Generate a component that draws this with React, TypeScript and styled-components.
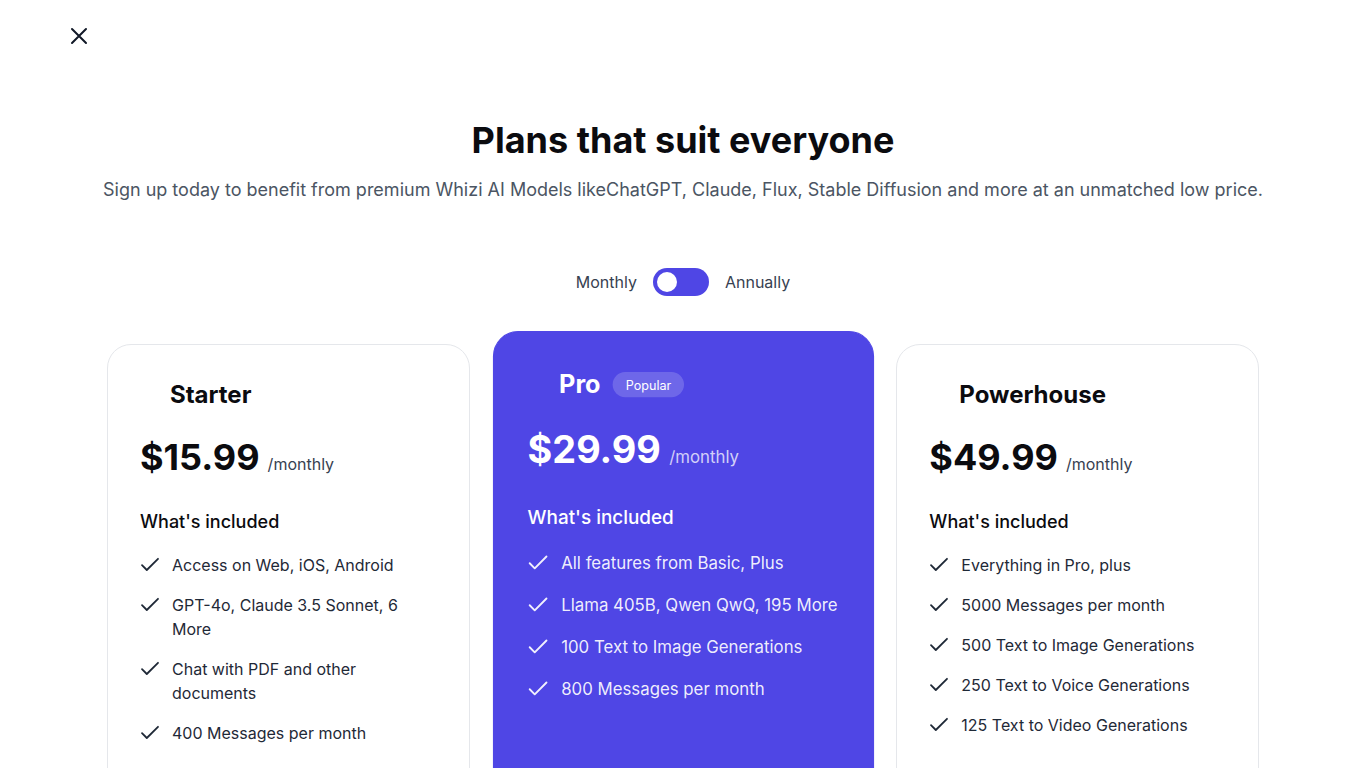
import React from "react";
import styled, { createGlobalStyle } from "styled-components";

const Global = createGlobalStyle`
  * { box-sizing: border-box; }
  html, body { margin: 0; padding: 0; background: #ffffff; }
  body { font-family: Inter, "Noto Sans", sans-serif; color: #111827; overflow: hidden; }
`;

const Page = styled.div`
  position: relative;
  width: 100%;
  min-height: 768px;
  padding-top: 116px;
`;

const CloseButton = styled.button`
  position: absolute;
  left: 65px;
  top: 22px;
  width: 28px;
  height: 28px;
  padding: 0;
  border: 0;
  background: transparent;
  display: flex;
  align-items: center;
  justify-content: center;
  cursor: pointer;
  color: #111827;
`;

const Header = styled.header`
  display: flex;
  flex-direction: column;
  align-items: center;
  text-align: center;
`;

const Title = styled.h1`
  margin: 0;
  font-size: 36px;
  line-height: 48px;
  font-weight: 700;
  color: #0b0b0f;
`;

const Subtitle = styled.p`
  margin: 17px 0 0;
  font-size: 18px;
  line-height: 1;
  color: #4b5563;
`;

const ToggleRow = styled.div`
  display: flex;
  align-items: center;
  justify-content: center;
  gap: 16px;
  margin-top: 69px;
`;

const ToggleLabel = styled.span`
  font-size: 16px;
  line-height: 24px;
  color: #374151;
`;

const Track = styled.div`
  width: 56px;
  height: 28px;
  border-radius: 14px;
  background: #4f46e5;
  padding: 4px;
  display: flex;
  align-items: center;
`;

const Knob = styled.div`
  width: 20px;
  height: 20px;
  border-radius: 50%;
  background: #ffffff;
`;

const Grid = styled.div`
  width: 1152px;
  margin: 48px auto 0;
  display: grid;
  grid-template-columns: repeat(3, 1fr);
  gap: 32px;
`;

const Card = styled.div<{ $featured?: boolean }>`
  min-height: 520px;
  border-radius: 24px;
  padding: 32px;
  border: 1px solid ${(p) => (p.$featured ? "#4f46e5" : "#e5e7eb")};
  background: ${(p) => (p.$featured ? "#4f46e5" : "#ffffff")};
  color: ${(p) => (p.$featured ? "#ffffff" : "#0b0b0f")};
  transform: ${(p) => (p.$featured ? "scale(1.05)" : "none")};
  display: flex;
  flex-direction: column;
`;

const NameRow = styled.div`
  display: flex;
  align-items: center;
  gap: 12px;
  padding-left: 30px;
  margin-top: 2px;
  height: 32px;
`;

const PlanName = styled.h2`
  margin: 0;
  font-size: 24px;
  line-height: 32px;
  font-weight: 700;
`;

const Badge = styled.span`
  display: inline-flex;
  align-items: center;
  height: 24px;
  padding: 0 12px;
  border-radius: 12px;
  background: rgba(255, 255, 255, 0.18);
  color: #ffffff;
  font-size: 12px;
  font-weight: 400;
`;

const PriceRow = styled.div`
  display: flex;
  align-items: baseline;
  gap: 8px;
  margin-top: 26px;
`;

const Price = styled.span`
  font-size: 36px;
  line-height: 40px;
  font-weight: 700;
`;

const Period = styled.span<{ $featured?: boolean }>`
  font-size: 16px;
  color: ${(p) => (p.$featured ? "rgba(255,255,255,0.75)" : "#374151")};
`;

const IncludedTitle = styled.h3`
  margin: 31px 0 0;
  font-size: 18px;
  line-height: 28px;
  font-weight: 500;
`;

const FeatureList = styled.ul`
  list-style: none;
  margin: 17px 0 0;
  padding: 0;
  display: flex;
  flex-direction: column;
  gap: 16px;
`;

const Feature = styled.li<{ $featured?: boolean }>`
  display: flex;
  align-items: flex-start;
  gap: 12px;
  font-size: 16px;
  line-height: 24px;
  color: ${(p) => (p.$featured ? "rgba(255,255,255,0.92)" : "#1f2937")};
`;

const CheckIcon = styled.svg`
  flex: none;
  width: 20px;
  height: 24px;
`;

const Check = () => (
  <CheckIcon viewBox="0 0 20 24" fill="none">
    <path
      d="M2 12.2 L6.8 17 L18 5.8"
      stroke="currentColor"
      strokeWidth="1.8"
      strokeLinecap="round"
      strokeLinejoin="round"
    />
  </CheckIcon>
);

type Plan = {
  name: string;
  price: string;
  featured?: boolean;
  features: string[];
};

const plans: Plan[] = [
  {
    name: "Starter",
    price: "$15.99",
    features: [
      "Access on Web, iOS, Android",
      "GPT-4o, Claude 3.5 Sonnet, 6 More",
      "Chat with PDF and other documents",
      "400 Messages per month",
    ],
  },
  {
    name: "Pro",
    price: "$29.99",
    featured: true,
    features: [
      "All features from Basic, Plus",
      "Llama 405B, Qwen QwQ, 195 More",
      "100 Text to Image Generations",
      "800 Messages per month",
    ],
  },
  {
    name: "Powerhouse",
    price: "$49.99",
    features: [
      "Everything in Pro, plus",
      "5000 Messages per month",
      "500 Text to Image Generations",
      "250 Text to Voice Generations",
      "125 Text to Video Generations",
    ],
  },
];

export default function App() {
  return (
    <>
      <Global />
      <Page>
        <CloseButton aria-label="Close">
          <svg width="28" height="28" viewBox="0 0 28 28" fill="none">
            <path d="M7 7 L21 21 M21 7 L7 21" stroke="currentColor" strokeWidth="2" strokeLinecap="round" />
          </svg>
        </CloseButton>
        <Header>
          <Title>Plans that suit everyone</Title>
          <Subtitle>
            Sign up today to benefit from premium Whizi AI Models likeChatGPT, Claude, Flux, Stable Diffusion and
            more at an unmatched low price.
          </Subtitle>
        </Header>
        <ToggleRow>
          <ToggleLabel>Monthly</ToggleLabel>
          <Track>
            <Knob />
          </Track>
          <ToggleLabel>Annually</ToggleLabel>
        </ToggleRow>
        <Grid>
          {plans.map((plan) => (
            <Card key={plan.name} $featured={plan.featured}>
              <NameRow>
                <PlanName>{plan.name}</PlanName>
                {plan.featured && <Badge>Popular</Badge>}
              </NameRow>
              <PriceRow>
                <Price>{plan.price}</Price>
                <Period $featured={plan.featured}>/monthly</Period>
              </PriceRow>
              <IncludedTitle>What's included</IncludedTitle>
              <FeatureList>
                {plan.features.map((f) => (
                  <Feature key={f} $featured={plan.featured}>
                    <Check />
                    <span>{f}</span>
                  </Feature>
                ))}
              </FeatureList>
            </Card>
          ))}
        </Grid>
      </Page>
    </>
  );
}
